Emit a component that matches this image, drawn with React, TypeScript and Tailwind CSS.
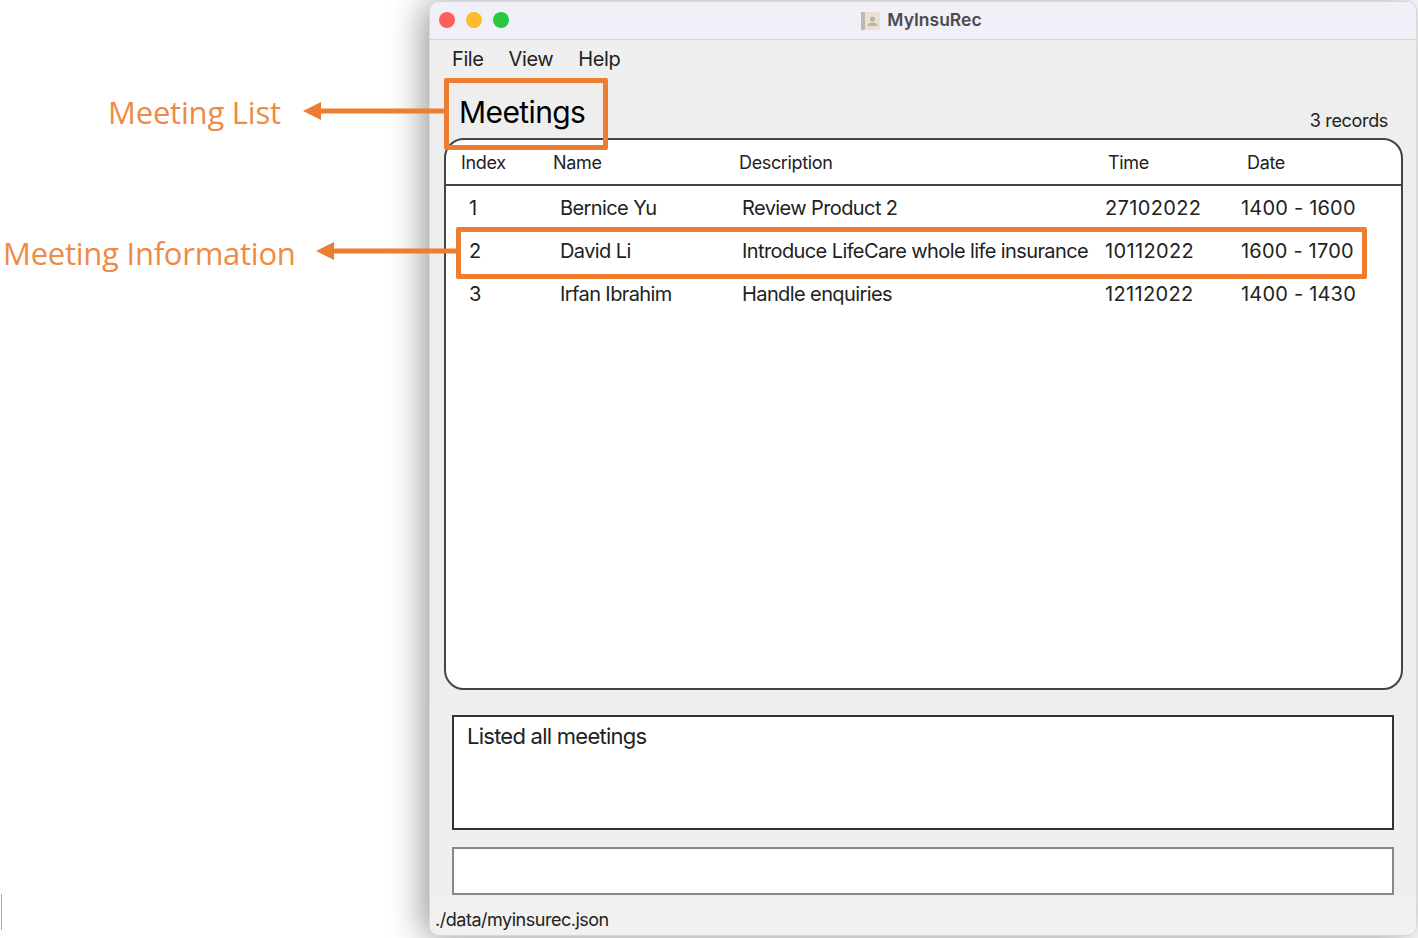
const FONT = "font-['Inter','Liberation_Sans',sans-serif]";

const meetings = [
  { index: '1', name: 'Bernice Yu', description: 'Review Product 2', time: '27102022', date: '1400 - 1600' },
  { index: '2', name: 'David Li', description: 'Introduce LifeCare whole life insurance', time: '10112022', date: '1600 - 1700' },
  { index: '3', name: 'Irfan Ibrahim', description: 'Handle enquiries', time: '12112022', date: '1400 - 1430' },
];

function AppIcon() {
  return (
    <svg width="19" height="18" viewBox="0 0 19 18" className="shrink-0">
      <rect x="0" y="0" width="19" height="18" rx="1" fill="#ebe2d3" />
      <rect x="0" y="0" width="4" height="18" fill="#bdb9b4" />
      <circle cx="11.5" cy="7" r="2.6" fill="#bdb5a8" />
      <path d="M6.5 14c0-2.6 2.2-3.6 5-3.6s5 1 5 3.6z" fill="#bdb5a8" />
    </svg>
  );
}

function LeftArrow({ width }: { width: number }) {
  return (
    <svg width={width} height="18" viewBox={`0 0 ${width} 18`} className="block">
      <polygon points="0,9 18,0 18,18" fill="#ed7d31" />
      <rect x="16" y="6.5" width={width - 16} height="5" fill="#ed7d31" />
    </svg>
  );
}

function MeetingTable() {
  return (
    <div className="h-[552px] rounded-[20px] border-2 border-[#444] bg-white overflow-hidden">
      <div className="h-[46px] grid grid-cols-[92px_186px_369px_139px_1fr] items-center pl-[15px] border-b-2 border-[#444] text-[18px] tracking-[-0.35px] text-[#222]">
        <span>Index</span>
        <span>Name</span>
        <span>Description</span>
        <span>Time</span>
        <span>Date</span>
      </div>
      {meetings.map((m) => (
        <div
          key={m.index}
          className="h-[43px] grid grid-cols-[91px_182px_363px_136px_1fr] items-center pl-[23px] text-[20px] tracking-[-0.6px] text-[#222] whitespace-nowrap first:mt-[1px]"
        >
          <span>{m.index}</span>
          <span>{m.name}</span>
          <span>{m.description}</span>
          <span className="tracking-[0.35px]">{m.time}</span>
          <span className="tracking-[0.2px]">{m.date}</span>
        </div>
      ))}
    </div>
  );
}

export default function App() {
  return (
    <div className={`relative flex w-[1418px] h-[938px] overflow-hidden bg-white ${FONT}`}>
      {/* Window */}
      <div className="ml-[429px] mt-px w-[988px] h-[935px] flex flex-col rounded-[10px] overflow-hidden border border-[#d8d8d8] bg-[#eeeeee] shadow-[-6px_2px_34px_rgba(0,0,0,0.4)]">
        <div className="h-[38px] shrink-0 relative flex items-center justify-center gap-[7px] pr-[3px] bg-[#f1f0f9] border-b border-[#d4d4d8]">
          <div className="absolute left-[9px] top-[10px] flex gap-[11px]">
            <span className="w-4 h-4 rounded-full bg-[#fe5f58]" />
            <span className="w-4 h-4 rounded-full bg-[#febb2e]" />
            <span className="w-4 h-4 rounded-full bg-[#28c840]" />
          </div>
          <AppIcon />
          <span className="text-[17.5px] font-semibold text-[#4c4c4c]">MyInsuRec</span>
        </div>

        <div className="h-[38px] shrink-0 flex items-center gap-[25px] pl-[22px] bg-[#efefef] text-[20px] tracking-[-0.4px] text-[#222]">
          <span>File</span>
          <span>View</span>
          <span>Help</span>
        </div>

        <div className="h-[626px] shrink-0 flex flex-col pl-[14px] pr-[13px]">
          <div className="h-[60px] shrink-0 flex items-end justify-between pl-[15px] pr-[15px]">
            <span className="text-[30px] leading-[40px] mb-[6px] tracking-[-0.6px] text-black">Meetings</span>
            <span className="text-[18px] leading-[24px] mb-[5px] tracking-[-0.33px] text-[#222]">3 records</span>
          </div>
          <MeetingTable />
        </div>

        <div className="h-[197px] shrink-0 flex flex-col px-[22px] bg-[#efefef]">
          <div className="h-[115px] mt-[11px] border-2 border-[#333] bg-white px-[13px] py-[4px] text-[22px] leading-[30px] tracking-[-0.75px] text-[#222]">
            Listed all meetings
          </div>
          <div className="h-[48px] mt-[17px] border-2 border-[#888] bg-white" />
        </div>

        <div className="h-[33px] shrink-0 flex items-center pl-[5px] pt-[3px] bg-[#f1f1f1] text-[18px] tracking-[-0.48px] text-[#222]">
          ./data/myinsurec.json
        </div>
      </div>

      {/* Annotations over the screenshot */}
      <div className="absolute left-[444px] top-[78px] w-[164px] h-[72px] border-[5px] border-[#ed7d31] rounded-[2px]" />
      <div className="absolute left-[456px] top-[227px] w-[911px] h-[52px] border-[5px] border-[#ed7d31] rounded-[2px]" />
      <div className="absolute left-[303px] top-[102px]">
        <LeftArrow width={142} />
      </div>
      <div className="absolute left-[316px] top-[242px]">
        <LeftArrow width={141} />
      </div>
      <span className="absolute left-[108px] top-[91px] text-[31px] leading-[42px] font-normal tracking-[-0.2px] font-['Open_Sans',sans-serif] text-[#ef8a45] whitespace-nowrap">
        Meeting List
      </span>
      <span className="absolute left-[3px] top-[232px] text-[31px] leading-[42px] font-normal tracking-[-0.25px] font-['Open_Sans',sans-serif] text-[#ef8a45] whitespace-nowrap">
        Meeting Information
      </span>

      <div className="absolute left-[1px] top-[894px] w-px h-[36px] bg-[#aaaaaa]" />
    </div>
  );
}
